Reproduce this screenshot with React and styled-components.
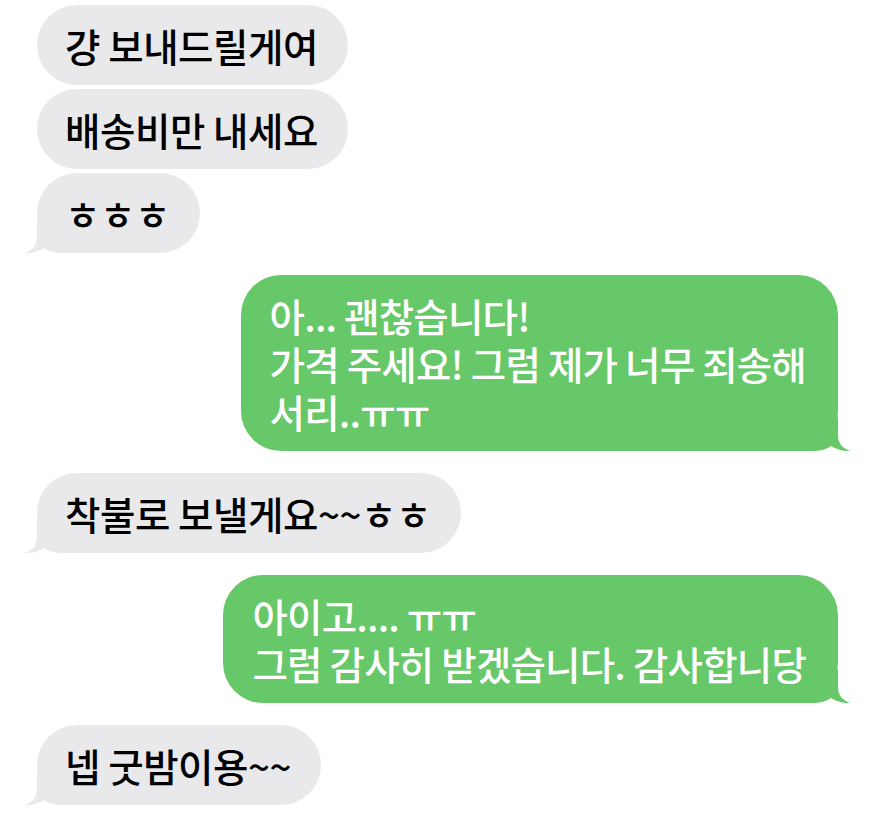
import styled, { createGlobalStyle } from "styled-components";

const GlobalStyle = createGlobalStyle`
    html, body {
        margin: 0;
        padding: 0;
        background: #ffffff;
    }
    body {
        font-family: "Noto Sans CJK KR", "Noto Sans", sans-serif;
    }
`

const Thread = styled.main`
    display: flex;
    flex-direction: column;
    gap: 22px;
    padding: 5px 37px 18px 37px;
    width: 875px;
    box-sizing: border-box;
`

const Group = styled.section`
    display: flex;
    flex-direction: column;
    gap: 4px;
    align-items: ${(p) => (p.$sent ? "flex-end" : "flex-start")};
`

const Bubble = styled.div`
    position: relative;
    box-sizing: border-box;
    width: fit-content;
    padding: ${(p) => (p.$sent ? "16px 32px 16px 29px" : "16px 30px 16px 28px")};
    border-radius: 40px;
    background-color: ${(p) => (p.$sent ? "#66c868" : "#e9e9eb")};
    color: ${(p) => (p.$sent ? "#ffffff" : "#000000")};
    font-size: 38.5px;
    font-weight: 500;
    letter-spacing: ${(p) => (p.$sent ? "-0.8px" : "-0.45px")};
    white-space: nowrap;
`

const Line = styled.div`
    position: relative;
    height: 48px;
    line-height: 48px;
`

const TailSvg = styled.svg`
    position: absolute;
    bottom: 0;
    width: 56px;
    height: 34px;
    ${(p) => (p.$sent ? "right: -12px; transform: scaleX(-1);" : "left: -12px;")}
`

function Tail({ sent }) {
    return (
        <TailSvg $sent={sent} viewBox="0 0 56 34" aria-hidden="true">
            <path
                d="M12 0 L12 18 C12 26 8 31 0 34 C7 34.5 14 32 19 29 C23 32 29 34 40 34 L56 34 L56 0 Z"
                fill={sent ? "#66c868" : "#e9e9eb"}
            />
        </TailSvg>
    )
}

function Message({ sent, tail, lines }) {
    return (
        <Bubble $sent={sent}>
            {tail && <Tail sent={sent} />}
            {lines.map((line, li) => (
                <Line key={li}>{line}</Line>
            ))}
        </Bubble>
    )
}

const thread = [
    { sent: false, msgs: [["걍 보내드릴게여"], ["배송비만 내세요"], ["ㅎㅎㅎ"]] },
    { sent: true, msgs: [["아... 괜찮습니다!", "가격 주세요! 그럼 제가 너무 죄송해", "서리..ㅠㅠ"]] },
    { sent: false, msgs: [["착불로 보낼게요~~ㅎㅎ"]] },
    { sent: true, msgs: [["아이고.... ㅠㅠ", "그럼 감사히 받겠습니다. 감사합니당"]] },
    { sent: false, msgs: [["넵 굿밤이용~~"]] },
]

export default function App() {
    return (
        <>
            <GlobalStyle />
            <Thread>
                {thread.map((group, gi) => (
                    <Group key={gi} $sent={group.sent}>
                        {group.msgs.map((lines, mi) => (
                            <Message
                                key={mi}
                                sent={group.sent}
                                tail={mi === group.msgs.length - 1}
                                lines={lines}
                            />
                        ))}
                    </Group>
                ))}
            </Thread>
        </>
    )
}
